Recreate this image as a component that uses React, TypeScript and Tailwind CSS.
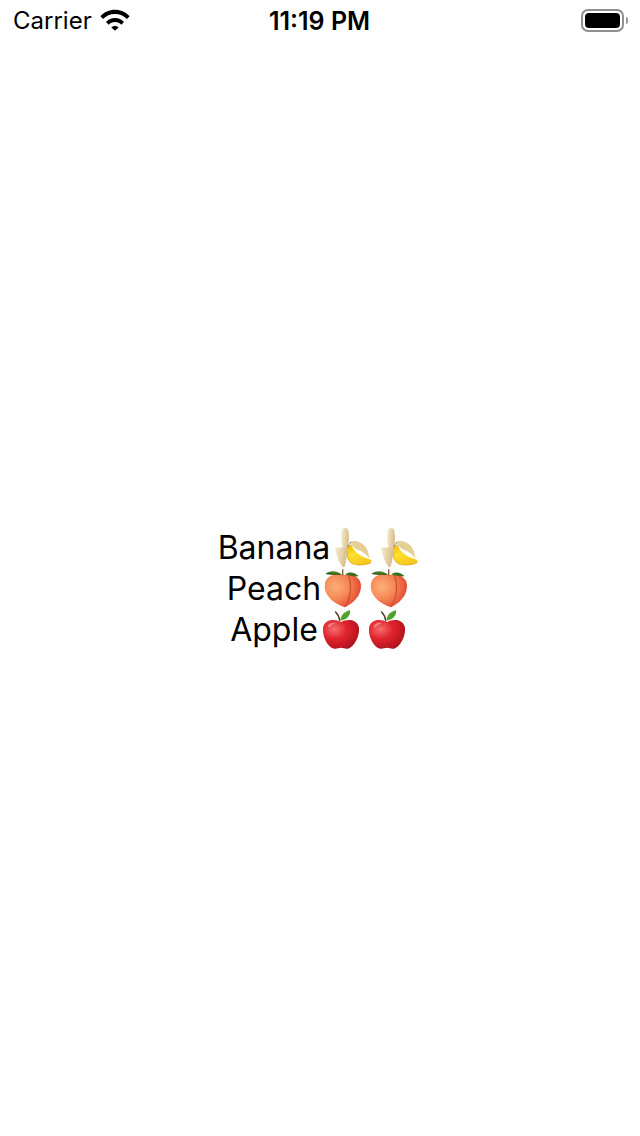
function Wifi() {
  return (
    <svg width="30" height="22" viewBox="0 0 30 22" className="block">
      <path d="M0.4 7.2C4.2 3.1 9.3 0.8 15 0.8s10.8 2.3 14.6 6.4l-2.6 2.8C23.900 6.800 19.700 4.900 15 4.900S6.100 6.800 3 10z" fill="#000" />
      <path d="M6 12.900C8.300 10.400 11.500 9 15 9s6.700 1.400 9 3.900l-2.700 2.800C19.700 14 17.500 13.100 15 13.100S10.300 14 8.700 15.700z" fill="#000" />
      <path d="M11.400 18.400C12.300 17.400 13.600 16.900 15 16.900s2.700 0.500 3.600 1.500L15 21.800z" fill="#000" />
    </svg>
  );
}

function Battery() {
  return (
    <div className="flex items-center gap-[2px]">
      <div className="w-[43px] h-[23px] rounded-[7px] border-2 border-[#8f8f8f] p-[2px]">
        <div className="w-full h-full rounded-[4px] bg-black" />
      </div>
      <div className="w-[2px] h-[7px] rounded-r-sm bg-[#9a9a9a]" />
    </div>
  );
}

function Banana() {
  return (
    <svg width="40" height="41" viewBox="0 0 40 41" className="block shrink-0">
      <defs>
        <linearGradient id="bananaPeel" x1="0" y1="0" x2="1" y2="0.2">
          <stop offset="0" stopColor="#f8edd2" />
          <stop offset="1" stopColor="#d8bf8a" />
        </linearGradient>
        <linearGradient id="bananaBody" x1="0" y1="0" x2="0.5" y2="1">
          <stop offset="0" stopColor="#f2b416" />
          <stop offset="0.5" stopColor="#fde02e" />
          <stop offset="1" stopColor="#f8c81c" />
        </linearGradient>
      </defs>
      <path d="M18 14.500C23 12.800 29 14.800 33 19C35.600 22 37 27 37.300 31.500C34.500 27.500 31 24.600 27.500 23.500C24 22.500 20.500 20 18 14.500z" fill="#e6cf96" />
      <path d="M15 20C16.500 18.500 18 17.500 19.500 17.500C21 22 24 26 28.500 28.500C31.500 30.300 35 31.600 38.500 32.500C39.800 33.200 40 35 39 35.700C33 38.300 25.500 38.600 20.500 36.800C15.500 34.500 13 26 15 20z" fill="url(#bananaBody)" />
      <path d="M14.800 24C14.800 29 16.800 34.800 20.500 36.800C25.500 38.600 33 38.300 39 35.700" fill="none" stroke="#e09c10" strokeWidth="0.8" />
      <path d="M9.700 3.500C10.300 0.300 15.500 0.100 16.200 3.200C17.300 8 17.200 14 16 19.500C14.500 20 11.800 20.500 10.300 20.500C9.300 15 8.800 8.500 9.700 3.500z" fill="url(#bananaPeel)" />
      <path d="M3 20.500C6.500 20.700 10.500 20.500 14.800 20C15.600 26 14.500 33.500 12.800 39.500C12 40.500 10.800 40.300 10.200 39.600C6.800 34.500 3.800 27.500 3 20.500z" fill="url(#bananaPeel)" />
      <path d="M15.500 20.500C16.500 18.500 17.500 16.500 18.800 15" stroke="#6d7680" strokeWidth="0.9" fill="none" />
    </svg>
  );
}

function Peach() {
  return (
    <svg width="40" height="41" viewBox="0 0 40 41" className="block shrink-0">
      <defs>
        <radialGradient id="peachBody" cx="0.3" cy="0.38" r="0.78">
          <stop offset="0" stopColor="#fcae78" />
          <stop offset="0.45" stopColor="#f58a56" />
          <stop offset="0.8" stopColor="#e85a3c" />
          <stop offset="1" stopColor="#d83c2e" />
        </radialGradient>
      </defs>
      <path d="M20 7C13 4.800 1.700 7 1.700 18.500C1.700 28.500 12 36 21.700 39.200C30 35.500 38.500 28 38 17C37.600 8.500 28 4.800 20 7z" fill="url(#peachBody)" />
      <path d="M25.700 8.500C28.300 15 29 28 21.700 39" fill="none" stroke="#c9502f" strokeWidth="1.300" />
      <path d="M3 5.700C7 2.500 13.500 2.500 18.300 6.300C13 7 7.500 7 3 5.700z" fill="#4d7d24" />
      <path d="M3 5.700C8 6.300 13.500 6.300 18.300 6.300" fill="none" stroke="#1e4a12" strokeWidth="0.9" />
      <path d="M22.300 6.300C26.500 3.300 32 4.300 35.700 8.300C31 8.700 26 8 22.300 6.300z" fill="#3f6e1e" />
      <path d="M19.700 7L19.700 1.700" stroke="#8a6238" strokeWidth="1.400" strokeLinecap="round" />
    </svg>
  );
}

function Apple() {
  return (
    <svg width="40" height="41" viewBox="0 0 40 41" className="block shrink-0">
      <defs>
        <radialGradient id="appleBody" cx="0.32" cy="0.32" r="0.85">
          <stop offset="0" stopColor="#f66e6e" />
          <stop offset="0.4" stopColor="#e0242e" />
          <stop offset="0.8" stopColor="#b81420" />
          <stop offset="1" stopColor="#8e0d16" />
        </radialGradient>
      </defs>
      <path d="M21 13C16 9.800 5.500 9.700 3.300 17.500C1.500 25.500 6.500 37 13.300 39.500C16.500 40.400 18.500 38.800 21 38.800C23.500 38.800 25.500 40.400 28.700 39.500C35 37 40.500 25.500 38.700 17.500C36.500 9.700 26 9.800 21 13z" fill="url(#appleBody)" />
      <path d="M8 16.500C10 14 13 13.500 16 14C13 15 10.500 16.500 9 19z" fill="#fff" fillOpacity="0.35" />
      <path d="M20.500 11.500C20.500 7 24 2.500 30 1.300C30.800 6 27.500 10.800 20.500 11.500z" fill="#4fa32a" />
      <path d="M19.700 11.500C19.200 8 17.800 5 15.500 3" fill="none" stroke="#5a3a22" strokeWidth="1.500" strokeLinecap="round" />
    </svg>
  );
}

export default function App() {
  return (
    <div className="relative flex flex-col h-[1136px] bg-white text-black font-['Inter',sans-serif]">
      <div className="flex items-center justify-between h-10 pl-[13px] pr-[12px] relative">
        <div className="flex items-center gap-[8px]">
          <span className="mt-[2px] text-[24px] leading-none">Carrier</span>
          <Wifi />
        </div>
        <span className="absolute left-0 right-0 mt-[2px] pr-[1px] text-center text-[25px] leading-none font-semibold">11:19 PM</span>
        <Battery />
      </div>
      <div className="flex-1 flex flex-col items-center justify-center">
        {[
          { name: "Banana", Icon: Banana },
          { name: "Peach", Icon: Peach },
          { name: "Apple", Icon: Apple },
        ].map(({ name, Icon }) => (
          <div key={name} className="flex items-center h-[41px] pr-[4px] text-[32px] leading-[41px]">
            <span className="mr-[2px]">{name}</span>
            <div className="flex gap-[6px]">
              <Icon />
              <Icon />
            </div>
          </div>
        ))}
      </div>
    </div>
  );
}
